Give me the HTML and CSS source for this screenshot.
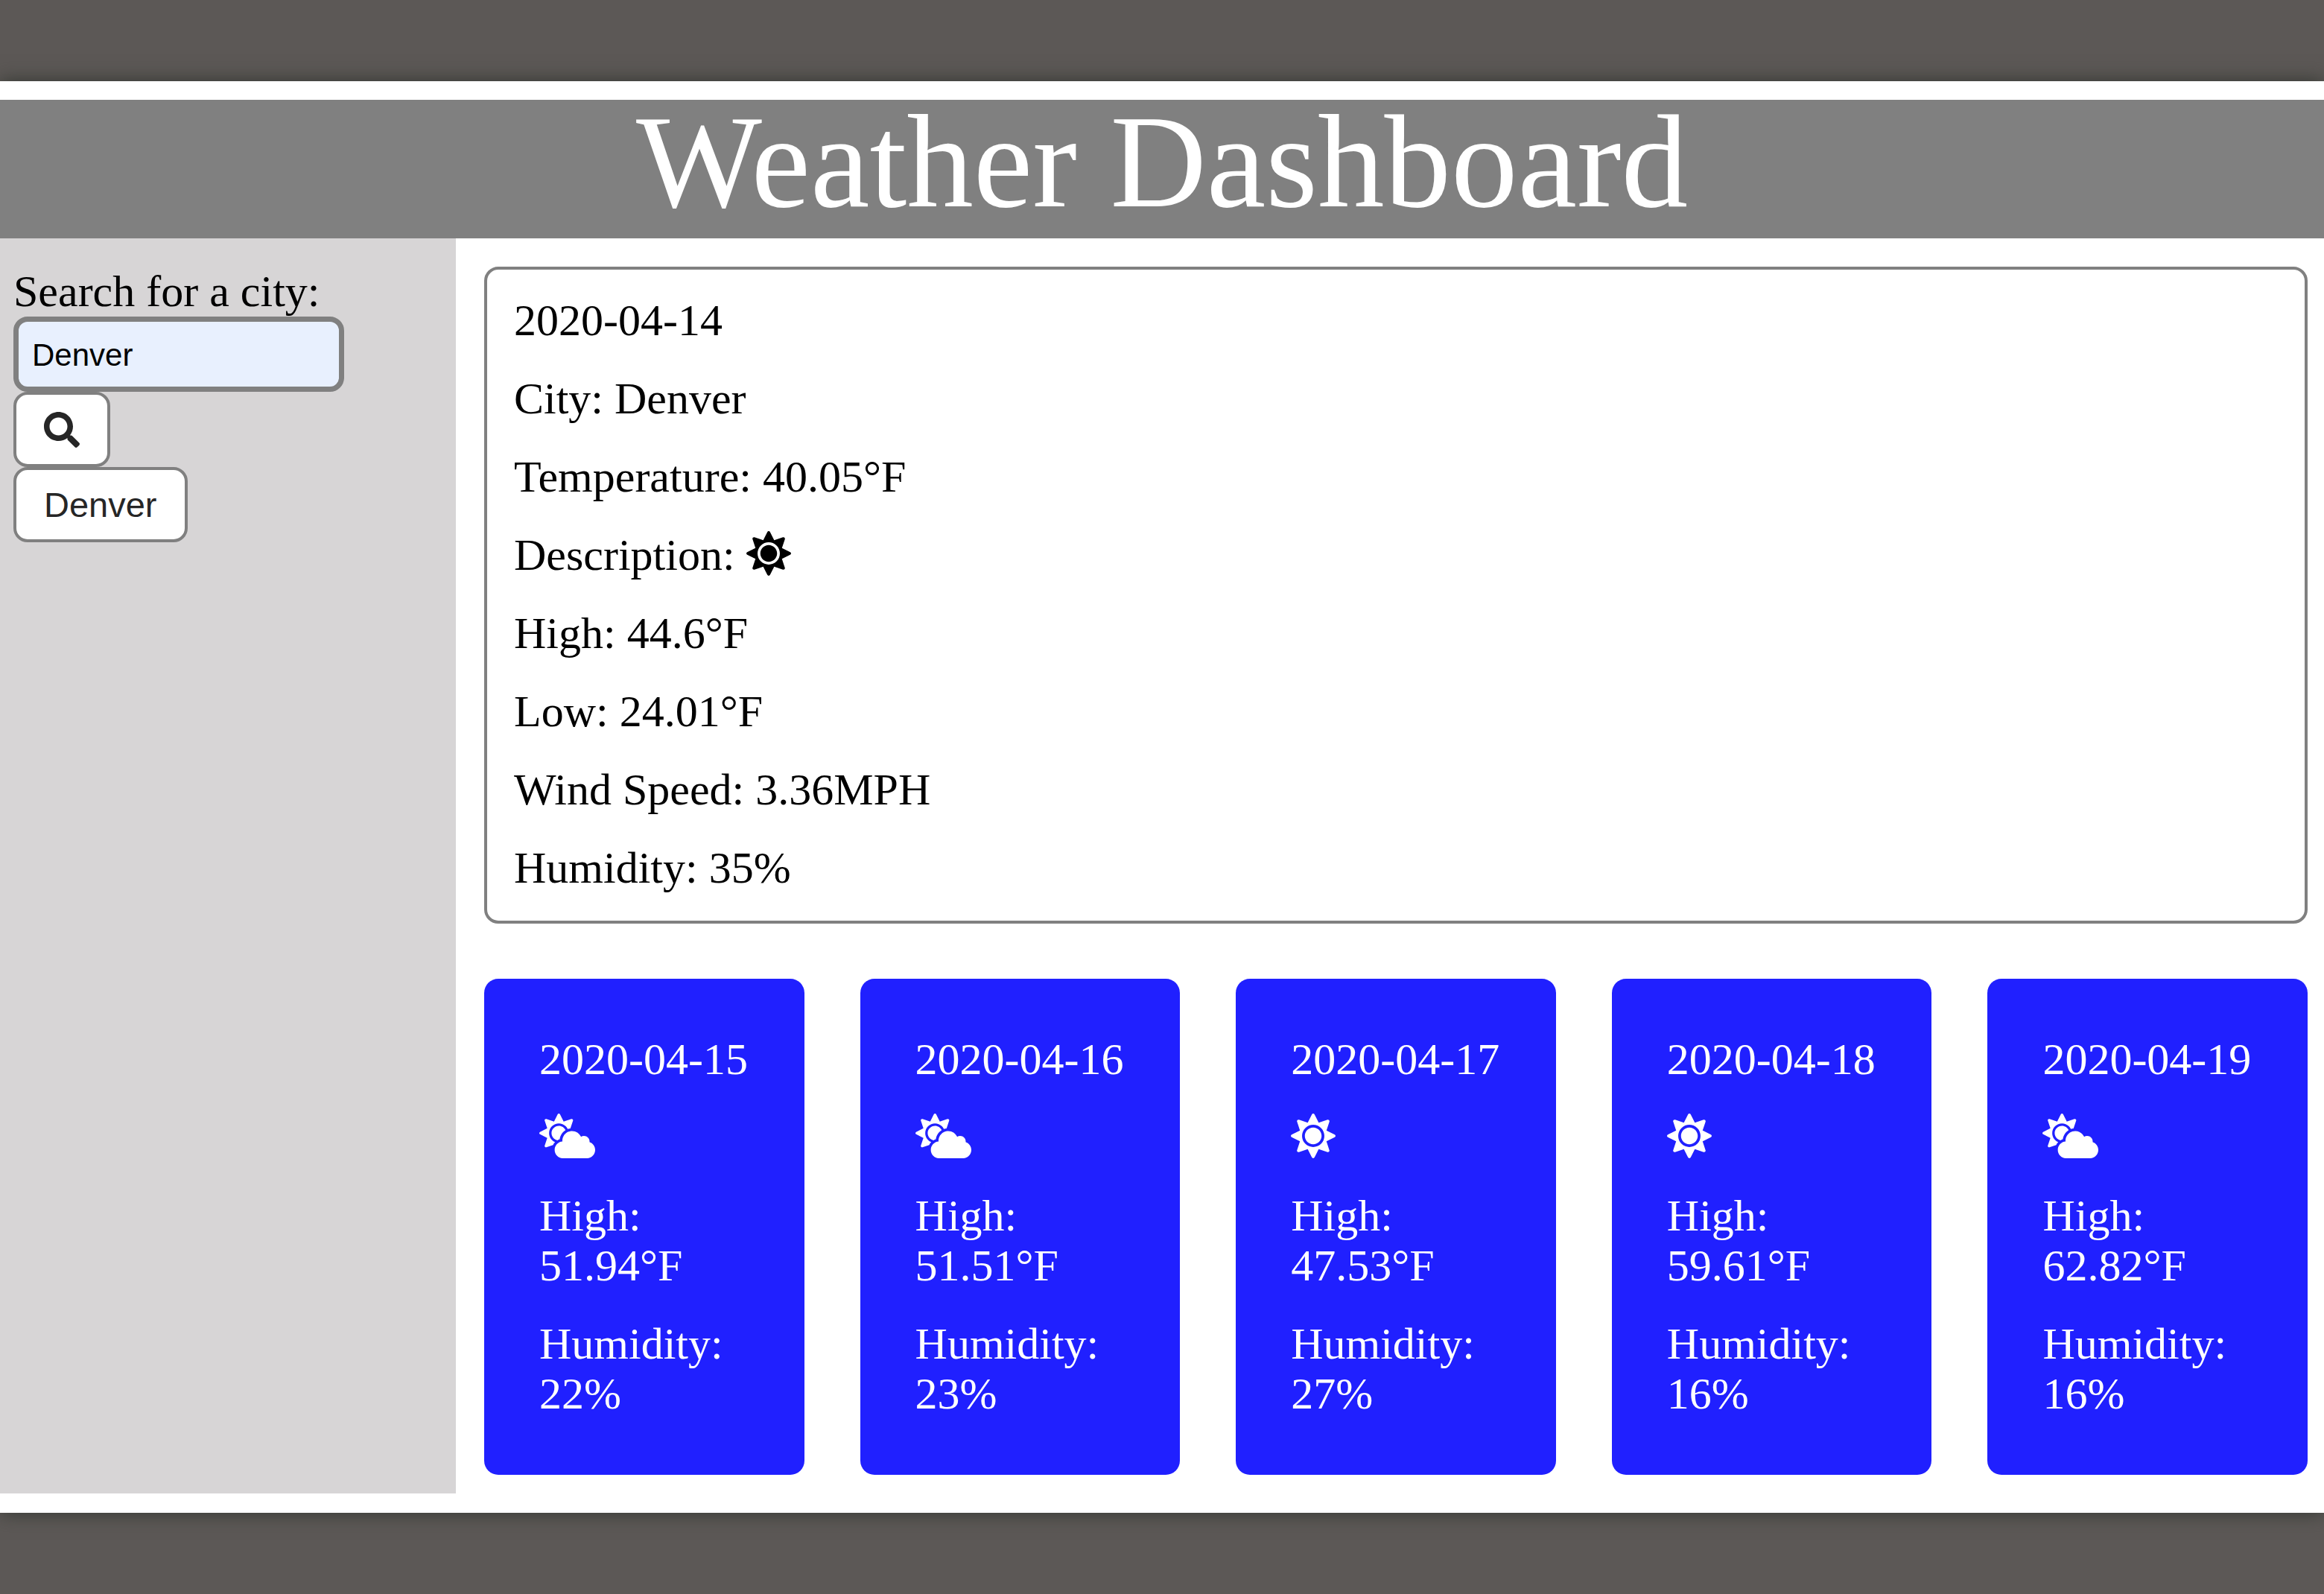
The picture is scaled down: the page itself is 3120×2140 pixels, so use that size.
FILE: index.html
```html
<!DOCTYPE html>
<html lang="en">
<head>
  <meta charset="utf-8">
  <title>Weather Dashboard</title>
  <link rel="stylesheet" href="styles.css">
</head>
<body>
  <svg class="sprite" aria-hidden="true">
    <symbol id="sun" viewBox="0 0 512 512"><path d="M256 160c-52.9 0-96 43.1-96 96s43.1 96 96 96 96-43.1 96-96-43.1-96-96-96zm246.4 80.5l-94.7-47.3 33.5-100.4c4.5-13.6-8.4-26.5-21.9-21.9l-100.4 33.5-47.4-94.8c-6.4-12.8-24.6-12.8-31 0l-47.3 94.7L92.7 70.8c-13.6-4.5-26.5 8.4-21.9 21.9l33.5 100.4-94.7 47.4c-12.8 6.4-12.8 24.6 0 31l94.7 47.3-33.5 100.5c-4.5 13.6 8.4 26.5 21.9 21.9l100.4-33.5 47.3 94.7c6.4 12.8 24.6 12.8 31 0l47.3-94.7 100.4 33.5c13.6 4.5 26.5-8.4 21.9-21.9l-33.5-100.4 94.7-47.3c13-6.5 13-24.7.2-31.1zm-155.9 106c-49.9 49.9-131.1 49.9-181 0-49.9-49.9-49.9-131.1 0-181 49.9-49.9 131.1-49.9 181 0 49.9 49.9 49.9 131.1 0 181z"/></symbol>
    <symbol id="cloud-sun" viewBox="0 0 640 512"><path d="M575.2 325.7c.2-1.9.8-3.7.8-5.6 0-35.3-28.7-64-64-64-12.6 0-24.2 3.8-34.1 10-17.6-38.8-56.5-66-101.9-66-61.8 0-112 50.1-112 112 0 3 .7 5.8.9 8.7-49.6 3.7-88.9 44.7-88.9 95.3 0 53 43 96 96 96h272c53 0 96-43 96-96 0-42.1-27.2-77.4-64.8-90.4zm-430.4-22.6c-43.7-43.7-43.7-114.7 0-158.3 43.7-43.7 114.7-43.7 158.4 0 9.7 9.7 16.9 20.9 22.3 32.7 9.8-3.7 20.1-6 30.7-7.5L386 81.1c4-11.9-7.3-23.1-19.2-19.2L279 91.2 237.5 8.4C232-2.8 216-2.8 210.4 8.4L169 91.2 81.1 61.9C69.3 58 58 69.3 61.9 81.1l29.3 87.8-82.8 41.5c-11.2 5.6-11.2 21.5 0 27.1l82.8 41.4-29.3 87.8c-4 11.9 7.3 23.1 19.2 19.2l76.1-25.3c6.1-12.4 14-23.7 23.6-33.5-13.1-5.4-25.4-13.4-36-24zm-4.8-79.2c0 40.8 29.3 74.8 67.9 82.3 8-4.7 16.3-8.8 25.2-11.7 5.4-44.3 31-82.5 67.4-105C287.3 160.4 258 140 223.9 140c-46.3 0-83.9 37.6-83.9 83.9z"/></symbol>
    <symbol id="search" viewBox="0 0 512 512"><path d="M505 442.7L405.3 343c-4.5-4.5-10.6-7-17-7H372c27.6-35.3 44-79.7 44-128C416 93.1 322.9 0 208 0S0 93.1 0 208s93.1 208 208 208c48.3 0 92.7-16.4 128-44v16.3c0 6.4 2.5 12.5 7 17l99.7 99.7c9.4 9.4 24.6 9.4 33.9 0l28.3-28.3c9.4-9.4 9.4-24.6.1-34zM208 336c-70.7 0-128-57.2-128-128s57.2-128 128-128 128 57.2 128 128-57.2 128-128 128z"/></symbol>
  </svg>

  <div class="page">
    <header class="header">
      <h1 class="title">Weather Dashboard</h1>
    </header>
    <div class="layout">
      <aside class="sidebar">
        <form class="search">
          <label class="search-label" for="city">Search for a city:</label>
          <input class="search-input" id="city" type="text" value="Denver">
          <button class="button" type="button" aria-label="Search"><svg class="search-icon"><use href="#search"/></svg></button>
          <button class="button" type="button">Denver</button>
        </form>
      </aside>
      <main class="main">
        <section class="current">
          <p>2020-04-14</p>
          <p>City: Denver</p>
          <p>Temperature: 40.05°F</p>
          <p>Description: <svg class="icon"><use href="#sun"/></svg></p>
          <p>High: 44.6°F</p>
          <p>Low: 24.01°F</p>
          <p>Wind Speed: 3.36MPH</p>
          <p>Humidity: 35%</p>
        </section>
        <section class="forecast">
          <article class="day">
            <p>2020-04-15</p>
            <p><svg class="icon icon-wide"><use href="#cloud-sun"/></svg></p>
            <p>High: 51.94°F</p>
            <p>Humidity: 22%</p>
          </article>
          <article class="day">
            <p>2020-04-16</p>
            <p><svg class="icon icon-wide"><use href="#cloud-sun"/></svg></p>
            <p>High: 51.51°F</p>
            <p>Humidity: 23%</p>
          </article>
          <article class="day">
            <p>2020-04-17</p>
            <p><svg class="icon"><use href="#sun"/></svg></p>
            <p>High: 47.53°F</p>
            <p>Humidity: 27%</p>
          </article>
          <article class="day">
            <p>2020-04-18</p>
            <p><svg class="icon"><use href="#sun"/></svg></p>
            <p>High: 59.61°F</p>
            <p>Humidity: 16%</p>
          </article>
          <article class="day">
            <p>2020-04-19</p>
            <p><svg class="icon icon-wide"><use href="#cloud-sun"/></svg></p>
            <p>High: 62.82°F</p>
            <p>Humidity: 16%</p>
          </article>
        </section>
      </main>
    </div>
  </div>
</body>
</html>
```
FILE: styles.css
```css
* {
  box-sizing: border-box;
}

body {
  margin: 0;
  padding: 109px 0;
  background: #5c5856;
  color: #000;
  font-family: "Liberation Serif", "Times New Roman", serif;
  font-size: 60px;
  line-height: 67px;
}

p {
  margin: 0;
}

.sprite {
  display: none;
}

.page {
  padding: 25px 0 26px;
  background: #fff;
  box-shadow: 0 0 24px #31352f;
}

.header {
  padding-bottom: 20px;
  background: #808080;
}

.title {
  margin: 0;
  color: #fff;
  font-size: 179px;
  font-weight: 400;
  line-height: 166px;
  text-align: center;
}

.layout {
  display: grid;
  grid-template-columns: 612px 1fr;
}

.sidebar {
  padding: 38px 18px;
  background: #d7d5d6;
}

.search {
  display: flex;
  flex-direction: column;
  align-items: flex-start;
}

.search-input {
  width: 444px;
  height: 101px;
  padding: 3px 18px 0;
  border: 7px solid #808080;
  border-radius: 19px;
  background: #e8f0fe;
  color: #000;
  font-family: "Liberation Sans", Arial, sans-serif;
  font-size: 42px;
}

.button {
  display: flex;
  align-items: center;
  height: 101px;
  padding: 0 37px;
  border: 4px solid #808080;
  border-radius: 19px;
  background: #fff;
  color: #262626;
  font-family: "Liberation Sans", Arial, sans-serif;
  font-size: 47px;
}

.search-icon {
  width: 48px;
  height: 48px;
  fill: currentColor;
}

.icon {
  width: 60px;
  height: 60px;
  fill: currentColor;
  vertical-align: -8px;
}

.icon-wide {
  width: 75px;
}

.main {
  display: flex;
  flex-direction: column;
  gap: 74px;
  padding: 38px 22px 25px 38px;
}

.current {
  display: flex;
  flex-direction: column;
  gap: 38px;
  padding: 35px 36px 37px;
  border: 4px solid #808080;
  border-radius: 19px;
}

.forecast {
  display: grid;
  grid-template-columns: repeat(5, 1fr);
  gap: 75px;
}

.day {
  display: flex;
  flex-direction: column;
  gap: 38px;
  padding: 75px 74px;
  border-radius: 19px;
  background: #2020ff;
  color: #fff;
}

.day p,
.current p {
  min-height: 67px;
}
```
